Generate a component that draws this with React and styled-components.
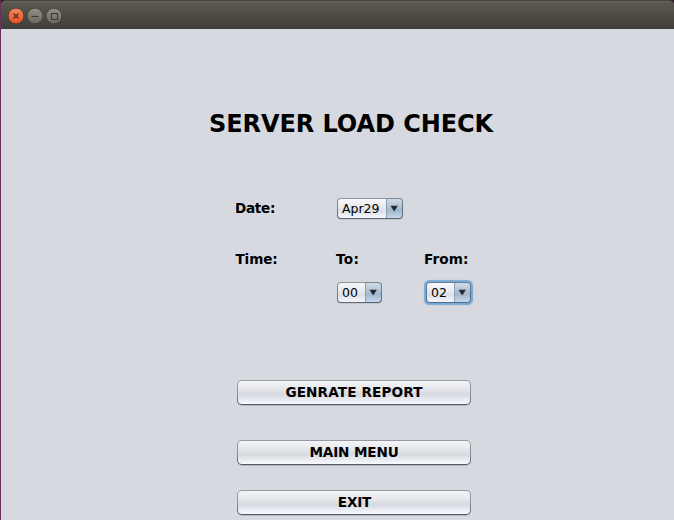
import React from "react";
import styled, { createGlobalStyle } from "styled-components";

const GlobalStyle = createGlobalStyle`
  * { box-sizing: border-box; }
  body { margin: 0; background: #d6d9e0; overflow: hidden; }
  button { font: inherit; }
`;

const Window = styled.div`
  width: 674px;
  height: 520px;
  display: flex;
  flex-direction: column;
  overflow: hidden;
  color: #000;
  background: #6b2f5e;
  font-family: "DejaVu Sans", sans-serif;
`;

const TitleBar = styled.header`
  flex: none;
  height: 29px;
  margin-left: 1px;
  padding: 1px 0 0 7px;
  display: flex;
  align-items: center;
  gap: 3px;
  border-top: 1px solid #45443e;
  border-radius: 5px 5px 0 0;
  background: linear-gradient(#67665b 0, #5a584e 2px, #3e3d38 100%);
  box-shadow: 0 -6px 0 6px #25191f;
  clip-path: inset(0);
`;

const WindowButton = styled.svg`
  width: 16px;
  height: 16px;
  display: block;
`;

const Content = styled.main`
  flex: 1;
  margin-left: 1px;
  padding: 79px 203px 0 208px;
  background: #d6d9e0;
`;

const Title = styled.h1`
  margin: 0;
  height: 32px;
  line-height: 32px;
  font-size: 24px;
  font-weight: bold;
  letter-spacing: -0.07px;
  white-space: nowrap;
`;

const Form = styled.div`
  display: grid;
  grid-template-columns: 101px 89px 60px;
  grid-template-rows: 22px 29px 22px 11px 22px;
  margin: 58px 0 0 26px;
`;

const Label = styled.label`
  grid-row: ${(p) => p.$row};
  grid-column: ${(p) => p.$col};
  margin-left: ${(p) => p.$shift || 0}px;
  line-height: 20px;
  font-size: 13.6px;
  font-weight: bold;
  letter-spacing: ${(p) => p.$spacing || 0}px;
  white-space: nowrap;
`;

const Combo = styled.button`
  grid-row: ${(p) => p.$row};
  grid-column: ${(p) => p.$col};
  width: ${(p) => p.$width}px;
  height: 21px;
  margin-left: 1px;
  padding: 1px;
  display: flex;
  border: 0;
  border-radius: 4px;
  background: ${(p) =>
    p.$focused
      ? "linear-gradient(#66829e, #526b84)"
      : "linear-gradient(90deg, transparent calc(100% - 17px), #35608744 0), linear-gradient(#92959c, #62656b)"};
  box-shadow: ${(p) =>
    p.$focused ? "0 0 1px 1.5px #78a9d4" : "0 1px 0 #c3c8cf"};
`;

const ComboValue = styled.span`
  flex: 1;
  padding-left: 4px;
  line-height: 20px;
  text-align: left;
  font-size: 12.5px;
  border-radius: 3px 0 0 3px;
  background: linear-gradient(#f6f7f9 0, #e6e8ed 48%, #dcdfe6 60%, #f4f6fb 100%);
`;

const ComboArrow = styled.span`
  width: 16px;
  display: flex;
  align-items: center;
  justify-content: center;
  border-left: 1px solid #8ba0b5;
  border-radius: 0 3px 3px 0;
  background: linear-gradient(#d1dce7 0, #adc0d2 45%, #a2b8cc 60%, #c3d8ec 100%);
`;

const Actions = styled.div`
  display: flex;
  flex-direction: column;
  margin: 76px 0 0 28px;
`;

const ActionButton = styled.button`
  width: 234px;
  height: 25px;
  margin-bottom: ${(p) => p.$gap || 0}px;
  padding: 0 0 1px ${(p) => p.$shift || 0}px;
  border: 1px solid transparent;
  border-radius: 5px;
  font-size: 13.6px;
  font-weight: bold;
  letter-spacing: ${(p) => p.$spacing || 0}px;
  line-height: 22px;
  color: #000;
  background:
    linear-gradient(#f4f5f8 0, #e3e5ea 40%, #d6d9df 58%, #dfe2e8 70%, #f8faff 100%) padding-box,
    linear-gradient(#989ba1 0, #898c92 60%, #53565c 100%) border-box;
  box-shadow: 0 1px 0 #b4b8bf;
`;

function ControlIcon({ kind }) {
  const close = kind === "close";
  return (
    <WindowButton viewBox="0 0 16 16" aria-label={kind}>
      <defs>
        <linearGradient id={kind} x1="0" y1="0" x2="0" y2="1">
          <stop offset="0" stopColor={close ? "#f58662" : "#929086"} />
          <stop offset="1" stopColor={close ? "#e8501f" : "#69675f"} />
        </linearGradient>
      </defs>
      <circle cx="8" cy="8" r="7.8" fill={`url(#${kind})`} stroke="#35342f" strokeWidth="0.6" />
      <g fill="none" stroke={close ? "#56301f" : "#3b3a35"} strokeWidth={close ? 1.4 : 1.1}>
        {close && <path d="M5.5 5.5l5 5M10.5 5.5l-5 5" />}
        {kind === "minimize" && <path d="M4.5 8.5h7" />}
        {kind === "maximize" && <path d="M5.5 5.5h6v6h-6z" />}
      </g>
    </WindowButton>
  );
}

function ComboBox({ value, ...rest }) {
  return (
    <Combo type="button" {...rest}>
      <ComboValue>{value}</ComboValue>
      <ComboArrow>
        <svg width="9" height="7" viewBox="0 0 9 7">
          <path d="M0.5 0.7h7.4L4.2 6.5z" fill="#232a31" />
        </svg>
      </ComboArrow>
    </Combo>
  );
}

export default function App() {
  return (
    <>
      <GlobalStyle />
      <Window>
        <TitleBar>
          <ControlIcon kind="close" />
          <ControlIcon kind="minimize" />
          <ControlIcon kind="maximize" />
        </TitleBar>
        <Content>
          <Title>SERVER LOAD CHECK</Title>
          <Form>
            <Label $row={1} $col={1} $spacing={-0.3}>Date:</Label>
            <ComboBox value="Apr29" $row={1} $col={2} $width={66} />
            <Label $row={3} $col={1} $spacing={-0.15} $shift={0.5}>Time:</Label>
            <Label $row={3} $col={2} $spacing={0.3}>To:</Label>
            <Label $row={3} $col={3} $shift={-1} $spacing={0.1}>From:</Label>
            <ComboBox value="00" $row={5} $col={2} $width={45} />
            <ComboBox value="02" $row={5} $col={3} $width={45} $focused />
          </Form>
          <Actions>
            <ActionButton $gap={35} $spacing={0.12}>GENRATE REPORT</ActionButton>
            <ActionButton $gap={25} $spacing={-0.15}>MAIN MENU</ActionButton>
            <ActionButton $spacing={-0.2} $shift={1}>EXIT</ActionButton>
          </Actions>
        </Content>
      </Window>
    </>
  );
}
